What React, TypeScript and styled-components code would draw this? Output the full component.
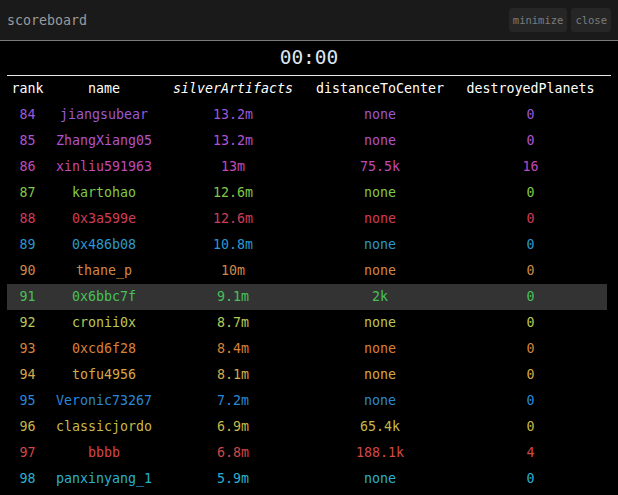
import React from "react";
import styled, { createGlobalStyle } from "styled-components";

const GlobalStyle = createGlobalStyle`
  html, body { margin: 0; padding: 0; background: #000; }
  body { font-family: "DejaVu Sans Mono", "Liberation Mono", monospace; }
`;

const Window = styled.div`
  width: 618px;
  height: 495px;
  background: #000;
  overflow: hidden;
  display: flex;
  flex-direction: column;
`;

const TitleBar = styled.div`
  height: 41px;
  flex-shrink: 0;
  box-sizing: border-box;
  background: #1a1a1a;
  border-bottom: 1px solid #7a7a7a;
  display: flex;
  align-items: center;
  justify-content: space-between;
  padding: 0 7px;
`;

const Title = styled.span`
  color: #9a9a9a;
  font-size: 13.3px;
`;

const Buttons = styled.div`
  display: flex;
  gap: 4px;
`;

const WinButton = styled.button`
  background: #262626;
  border: none;
  border-radius: 3px;
  color: #7c7c7c;
  font-family: "DejaVu Sans Mono", monospace;
  font-size: 10.5px;
  height: 24px;
  padding: 0 4px;
  cursor: pointer;
`;

const Body = styled.div`
  padding: 0 7px;
  display: flex;
  flex-direction: column;
`;

const Timer = styled.div`
  color: #dde6f0;
  font-size: 19.5px;
  text-align: center;
  height: 34px;
  line-height: 34px;
  border-bottom: 1px solid #e8e8e8;
`;

const Grid = styled.div`
  width: 600px;
  display: grid;
  grid-template-columns: 41px 112px 146px 148px 153px;
`;

const Row = styled.div<{ $highlight?: boolean; $color?: string }>`
  display: contents;
  & > div {
    background: ${(p) => (p.$highlight ? "#333333" : "transparent")};
    color: ${(p) => p.$color ?? "#ffffff"};
  }
`;

const Cell = styled.div<{ $italic?: boolean }>`
  height: 26px;
  line-height: 26px;
  text-align: center;
  font-size: 13.3px;
  white-space: nowrap;
  font-style: ${(p) => (p.$italic ? "italic" : "normal")};
`;

const HeadCell = styled(Cell)`
  color: #ffffff;
  font-weight: 500;
`;

type Player = {
  rank: number;
  name: string;
  silver: string;
  dist: string;
  destroyed: string;
  color: string;
};

const players: Player[] = [
  { rank: 84, name: "jiangsubear", silver: "13.2m", dist: "none", destroyed: "0", color: "#9a58d8" },
  { rank: 85, name: "ZhangXiang05", silver: "13.2m", dist: "none", destroyed: "0", color: "#b054d0" },
  { rank: 86, name: "xinliu591963", silver: "13m", dist: "75.5k", destroyed: "16", color: "#c04ab8" },
  { rank: 87, name: "kartohao", silver: "12.6m", dist: "none", destroyed: "0", color: "#80c848" },
  { rank: 88, name: "0x3a599e", silver: "12.6m", dist: "none", destroyed: "0", color: "#d03c58" },
  { rank: 89, name: "0x486b08", silver: "10.8m", dist: "none", destroyed: "0", color: "#2898d0" },
  { rank: 90, name: "thane_p", silver: "10m", dist: "none", destroyed: "0", color: "#d08848" },
  { rank: 91, name: "0x6bbc7f", silver: "9.1m", dist: "2k", destroyed: "0", color: "#48c058" },
  { rank: 92, name: "cronii0x", silver: "8.7m", dist: "none", destroyed: "0", color: "#b8c858" },
  { rank: 93, name: "0xcd6f28", silver: "8.4m", dist: "none", destroyed: "0", color: "#d88038" },
  { rank: 94, name: "tofu4956", silver: "8.1m", dist: "none", destroyed: "0", color: "#d8a848" },
  { rank: 95, name: "Veronic73267", silver: "7.2m", dist: "none", destroyed: "0", color: "#2888d8" },
  { rank: 96, name: "classicjordo", silver: "6.9m", dist: "65.4k", destroyed: "0", color: "#c8b848" },
  { rank: 97, name: "bbbb", silver: "6.8m", dist: "188.1k", destroyed: "4", color: "#d04848" },
  { rank: 98, name: "panxinyang_1", silver: "5.9m", dist: "none", destroyed: "0", color: "#28b0d0" },
];

export default function App() {
  return (
    <>
      <GlobalStyle />
      <Window>
        <TitleBar>
          <Title>scoreboard</Title>
          <Buttons>
            <WinButton>minimize</WinButton>
            <WinButton>close</WinButton>
          </Buttons>
        </TitleBar>
        <Body>
          <Timer>00:00</Timer>
          <Grid>
            <Row>
              <HeadCell>rank</HeadCell>
              <HeadCell>name</HeadCell>
              <HeadCell $italic>silverArtifacts</HeadCell>
              <HeadCell>distanceToCenter</HeadCell>
              <HeadCell>destroyedPlanets</HeadCell>
            </Row>
            {players.map((p) => (
              <Row key={p.rank} $color={p.color} $highlight={p.rank === 91}>
                <Cell>{p.rank}</Cell>
                <Cell>{p.name}</Cell>
                <Cell>{p.silver}</Cell>
                <Cell>{p.dist}</Cell>
                <Cell>{p.destroyed}</Cell>
              </Row>
            ))}
          </Grid>
        </Body>
      </Window>
    </>
  );
}
